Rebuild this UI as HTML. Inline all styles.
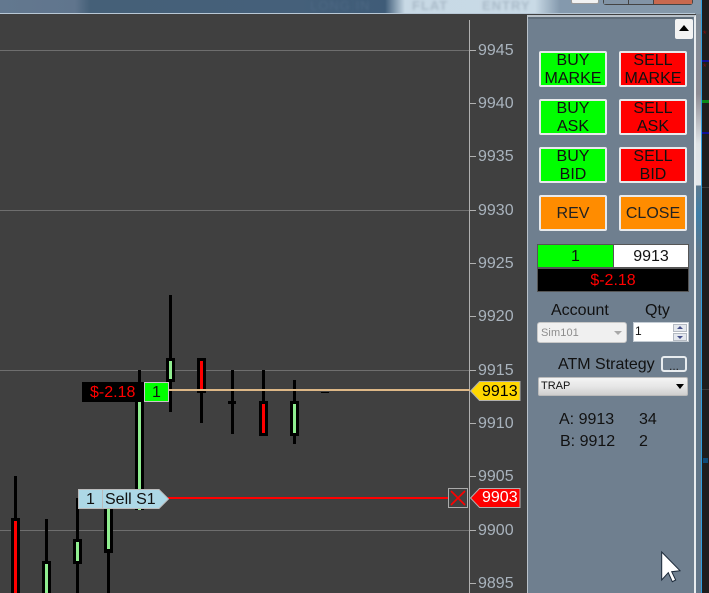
<!DOCTYPE html>
<html><head><meta charset="utf-8"><style>
html,body{margin:0;padding:0;background:#404040}
body{position:relative;width:709px;height:593px;overflow:hidden;font-family:"Liberation Sans",sans-serif}
div{position:absolute;box-sizing:border-box}
.b{width:68px;height:36px;border:2px solid #e8eaec;border-radius:2px;color:#111;font-size:16px;line-height:18px;text-align:center;overflow:hidden;padding:0}
.b span{position:relative;top:-1px;display:block}
.g{background:#0f0}.r{background:#f00}.o{background:#ff8c00;line-height:34px;color:#222}
.t{color:#111;font-size:16px;line-height:18px;white-space:nowrap}
.a{left:478px;color:#a9b3bd;font-size:16px;line-height:18px}
</style></head><body>
<div style="left:0;top:0;width:709px;height:14px;background:linear-gradient(90deg,#63788f 0,#60758d 75px,#456078 90px,#45607a 300px,#3f5c78 385px,#c8d9e5 405px,#c9dae6 535px,#8499ad 560px,#8497a8 700px)"></div>
<div style="left:412px;top:-2px;font-size:13px;letter-spacing:1px;font-weight:bold;color:#a9bac8;filter:blur(1.4px)">FLAT</div>
<div style="left:482px;top:-2px;font-size:13px;letter-spacing:1px;font-weight:bold;color:#a9bac8;filter:blur(1.4px)">ENTRY</div>
<div style="left:310px;top:-2px;font-size:13px;letter-spacing:1px;color:#4d6884;filter:blur(1.4px)">LONG IN</div>
<div style="left:571px;top:-2px;width:28px;height:6px;background:#f2f2f2;border:1px solid #999;border-radius:2px"></div>
<div style="left:603px;top:-2px;width:90px;height:7px;background:#444;border-radius:3px"></div>
<div style="left:604px;top:-2px;width:24px;height:6px;background:#8294a6"></div>
<div style="left:629px;top:-2px;width:24px;height:6px;background:#8294a6"></div>
<div style="left:654px;top:-2px;width:38px;height:6px;background:#c8694e"></div>
<div style="left:0;top:13px;width:695px;height:1px;background:#b8c8d6"></div>
<div style="left:0;top:14px;width:527px;height:579px;background:#404040"></div>

<svg style="position:absolute;left:0;top:0" width="530" height="593" shape-rendering="crispEdges">
<g fill="#6e6e6e"><rect x="0" y="50" width="469" height="1"/><rect x="0" y="210" width="469" height="1"/><rect x="0" y="370" width="469" height="1"/><rect x="0" y="530" width="469" height="1"/></g>
<g fill="#b0b0b0"><rect x="469" y="20" width="1" height="573"/>
<rect x="470" y="50" width="6" height="1"/><rect x="470" y="103" width="6" height="1"/><rect x="470" y="156" width="6" height="1"/><rect x="470" y="210" width="6" height="1"/><rect x="470" y="263" width="6" height="1"/><rect x="470" y="316" width="6" height="1"/><rect x="470" y="370" width="6" height="1"/><rect x="470" y="423" width="6" height="1"/><rect x="470" y="476" width="6" height="1"/><rect x="470" y="530" width="6" height="1"/><rect x="470" y="583" width="6" height="1"/></g>
<g fill="#000">
<rect x="14" y="476" width="3" height="50"/><rect x="11" y="518" width="9" height="75"/>
<rect x="45" y="519" width="3" height="50"/><rect x="42" y="561" width="9" height="32"/>
<rect x="76" y="498" width="3" height="95"/><rect x="73" y="539" width="9" height="25"/>
<rect x="107" y="505" width="3" height="88"/><rect x="104" y="505" width="9" height="48"/>
<rect x="138" y="370" width="3" height="40"/><rect x="135" y="400" width="9" height="110"/>
<rect x="169" y="295" width="3" height="117"/><rect x="166" y="358" width="9" height="24"/>
<rect x="200" y="358" width="3" height="65"/><rect x="197" y="358" width="9" height="35"/>
<rect x="231" y="370" width="3" height="64"/><rect x="228" y="401" width="8" height="3"/>
<rect x="262" y="370" width="3" height="35"/><rect x="259" y="401" width="9" height="35"/>
<rect x="293" y="380" width="3" height="64"/><rect x="290" y="401" width="9" height="35"/>
<rect x="321" y="392" width="8" height="1"/>
</g>
<g fill="#f00"><rect x="14" y="521" width="3" height="72"/><rect x="200" y="361" width="3" height="30"/><rect x="262" y="404" width="3" height="29"/></g>
<g fill="#90ee90"><rect x="45" y="564" width="3" height="29"/><rect x="76" y="542" width="3" height="19"/><rect x="107" y="505" width="3" height="44"/><rect x="138" y="400" width="3" height="110"/><rect x="169" y="361" width="3" height="18"/><rect x="293" y="404" width="3" height="29"/></g>
<rect x="168" y="389" width="302" height="2" fill="#deb887"/>
<rect x="168" y="497" width="280" height="2" fill="#f00"/>
<polygon points="470.5,391 479.5,381.5 520,381.5 520,400.5 479.5,400.5" fill="#ffd700" stroke="#b0b0b0" shape-rendering="auto"/>
<polygon points="470.5,498 479.5,488.5 520,488.5 520,507.5 479.5,507.5" fill="#f00" stroke="#b0b0b0" shape-rendering="auto"/>
<rect x="448.5" y="488.5" width="19" height="19" fill="#404040" stroke="#aaa"/>
<path d="M451 491L465 505M465 491L451 505" stroke="#f00" stroke-width="1.6" fill="none" shape-rendering="auto"/>
<polygon points="78.5,489.5 159,489.5 168.5,499 159,508.5 78.5,508.5" fill="#add8e6" stroke="#bbb" shape-rendering="auto"/>
<rect x="102" y="490" width="1" height="18" fill="#bbb"/>
<rect x="82" y="382" width="62" height="20" fill="#000"/>
<rect x="144.5" y="382.5" width="24" height="19" fill="#0f0" stroke="#c8c8c8"/>
</svg>

<div class="a" style="top:42px">9945</div>
<div class="a" style="top:95px">9940</div>
<div class="a" style="top:148px">9935</div>
<div class="a" style="top:202px">9930</div>
<div class="a" style="top:255px">9925</div>
<div class="a" style="top:308px">9920</div>
<div class="a" style="top:362px">9915</div>
<div class="a" style="top:415px">9910</div>
<div class="a" style="top:468px">9905</div>
<div class="a" style="top:522px">9900</div>
<div class="a" style="top:575px">9895</div>
<div style="left:482px;top:383px;color:#000;font-size:16px;line-height:18px">9913</div>
<div style="left:482px;top:489px;color:#fff;font-size:16px;line-height:18px">9903</div>
<div style="left:90px;top:384px;color:#f00;font-size:16px;line-height:18px">$-2.18</div>
<div style="left:152px;top:384px;color:#111;font-size:16px;line-height:18px">1</div>
<div style="left:86px;top:491px;color:#111;font-size:16px;line-height:18px">1</div>
<div style="left:105px;top:491px;color:#111;font-size:16px;line-height:18px">Sell S1</div>

<div style="left:527px;top:15px;width:169px;height:578px;background:#6f7f8f;border-left:1px solid #b9c2ca;border-top:2px solid #b9c2ca;border-right:2px solid #e8ecef"></div>
<div style="left:528px;top:17px;width:165px;height:2px;background:#5f6d7a"></div>
<div style="left:696px;top:14px;width:5px;height:579px;background:linear-gradient(180deg,#7f8b96 0,#8f8d95 80px,#dfe3e6 130px,#e4e7ea 171px,#5d7a90 172px,#3f7fa8 200px,#5f7689 240px,#637688 100%)"></div>
<div style="left:696px;top:0;width:5px;height:14px;background:#8497a8"></div>
<div style="left:701px;top:0;width:1px;height:593px;background:#30a0e0"></div>
<div style="left:702px;top:0;width:7px;height:593px;background:#1e1e1e"></div>
<div style="left:702px;top:187px;width:7px;height:1px;background:#3a3a3a"></div>
<div style="left:702px;top:389px;width:7px;height:1px;background:#3a3a3a"></div>
<div style="left:702px;top:100px;width:7px;height:3px;background:#0a8a1a"></div>
<div style="left:702px;top:132px;width:7px;height:2px;background:#10109a"></div>
<div style="left:702px;top:60px;width:7px;height:2px;background:#10109a"></div>
<div style="left:703px;top:30px;font-size:9px;line-height:9px;color:#8a1010">*</div>
<div style="left:703px;top:63px;font-size:9px;line-height:9px;color:#8a1010">*</div>
<div style="left:703px;top:458px;width:5px;height:5px;background:#0e4a78"></div>

<div style="left:675px;top:19px;width:18px;height:20px;background:#f3f3f3;border-radius:2px"></div>
<svg style="position:absolute;left:675px;top:19px" width="18" height="20"><polygon points="4,12 14,12 9,6" fill="#000"/></svg>

<div class="b g" style="left:539px;top:51px"><span>BUY<br>MARKE</span></div>
<div class="b r" style="left:619px;top:51px"><span>SELL<br>MARKE</span></div>
<div class="b g" style="left:539px;top:99px"><span>BUY<br>ASK</span></div>
<div class="b r" style="left:619px;top:99px"><span>SELL<br>ASK</span></div>
<div class="b g" style="left:539px;top:147px"><span>BUY<br>BID</span></div>
<div class="b r" style="left:619px;top:147px"><span>SELL<br>BID</span></div>
<div class="b o" style="left:539px;top:195px">REV</div>
<div class="b o" style="left:619px;top:195px">CLOSE</div>

<div style="left:537px;top:244px;width:152px;height:48px;background:#555"></div>
<div style="left:538px;top:245px;width:75px;height:22px;background:#0f0;color:#111;font-size:16px;line-height:23px;text-align:center">1</div>
<div style="left:614px;top:245px;width:74px;height:22px;background:#fff;color:#111;font-size:16px;line-height:23px;text-align:center">9913</div>
<div style="left:538px;top:269px;width:150px;height:22px;background:#000;color:#f00;font-size:16px;line-height:23px;text-align:center">$-2.18</div>

<div class="t" style="left:551px;top:302px">Account</div>
<div class="t" style="left:645px;top:302px">Qty</div>
<div style="left:537px;top:322px;width:90px;height:21px;background:#f0f0f0;border:1px solid #c8c8c8;border-radius:3px;color:#8d8d8d;font-size:11px;line-height:20px;padding-left:3px;letter-spacing:.1px">Sim101</div>
<svg style="position:absolute;left:612px;top:329px" width="12" height="8"><polygon points="2,2 10,2 6,6" fill="#a8a8a8"/></svg>
<div style="left:633px;top:322px;width:56px;height:20px;background:#fff;border:1px solid #c4ccd4;color:#111;font-size:12px;line-height:16px;padding-left:1px">1</div>
<div style="left:673px;top:324px;width:14px;height:8px;background:#e4e8ee;border:1px solid #b4bac2"></div>
<div style="left:673px;top:333px;width:14px;height:8px;background:#e4e8ee;border:1px solid #b4bac2"></div>
<svg style="position:absolute;left:673px;top:324px" width="14" height="17"><polygon points="4,5 10,5 7,2" fill="#46508a"/><polygon points="4,12 10,12 7,15" fill="#46508a"/></svg>
<div class="t" style="left:558px;top:356px">ATM Strategy</div>
<div style="left:661px;top:356px;width:26px;height:16px;background:#6f7f8f;border:2px solid #e8ecef;border-radius:3px;color:#222;font-size:12px;line-height:17px;text-align:center">...</div>
<div style="left:538px;top:377px;width:150px;height:19px;background:linear-gradient(180deg,#f4f4f4,#e6e6e6 50%,#cfcfcf);border:1px solid #bbb;border-radius:2px;color:#111;font-size:11px;line-height:17px;padding-left:2px">TRAP</div>
<svg style="position:absolute;left:675px;top:383px" width="10" height="8"><polygon points="1,1 9,1 5,6" fill="#000"/></svg>
<div class="t" style="left:559px;top:411px">A: 9913</div>
<div class="t" style="left:639px;top:411px">34</div>
<div class="t" style="left:560px;top:433px">B: 9912</div>
<div class="t" style="left:639px;top:433px">2</div>

<svg style="position:absolute;left:655px;top:548px" width="32" height="38"><polygon points="6.7,4 6.7,32 13.3,24.7 17.3,33.7 20.7,32 16.7,23.7 25,22.7" fill="#fff" stroke="#1c2a3a" stroke-width="1"/></svg>
</body></html>
